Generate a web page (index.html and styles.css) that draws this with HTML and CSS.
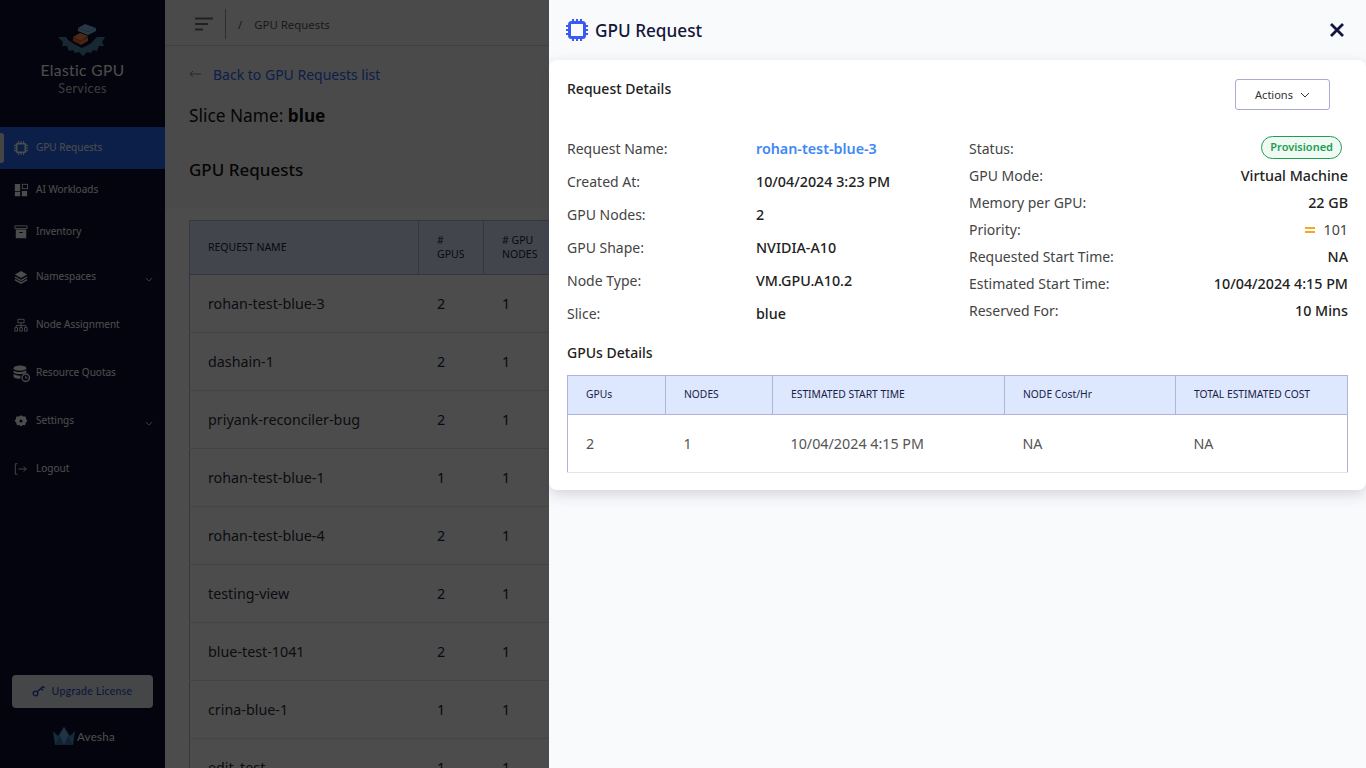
FILE: index.html
```html
<!DOCTYPE html>
<html lang="en">
<head>
<meta charset="utf-8">
<title>GPU Request</title>
<link rel="stylesheet" href="styles.css">
</head>
<body>
<div class="app">
  <aside class="sidebar">
    <div class="brand">
      <svg class="brand-mark" viewBox="0 0 65 40" width="65" height="40">
        <path d="M8 17h8l2 3 6 4 8 4 8-4 4-4 3-3h8l-3 5 2 4h-5l-2 5-4-1-2 3-4-1-4 4-4-4-4 1-2-3-4 1-2-5h-5l1-4z" fill="#4f86a8"/>
        <path d="M23 17l7-4 8 3-7 5z" fill="#ff8a4a"/>
        <path d="M23 17l8 4v4l-8-4z" fill="#e8652c"/>
        <path d="M31 21l7-4v4l-7 4z" fill="#ff7a3a"/>
        <path d="M28 8l7-4 11 4-8 4z" fill="#7fb8e8"/>
        <path d="M28 8l10 4v3l-10-4z" fill="#8fc0e8"/>
        <path d="M38 12l8-4v3l-8 4z" fill="#8abce6"/>
      </svg>
      <div class="brand-name">Elastic GPU</div>
      <div class="brand-sub">Services</div>
    </div>
    <nav class="nav">
      <a class="nav-item active">
        <svg class="nav-icon" viewBox="0 0 16 16"><rect x="3" y="3" width="10" height="10" rx="1.5" fill="none" stroke="currentColor" stroke-width="2"/><path d="M5 0v3M8 0v3M11 0v3M5 13v3M8 13v3M11 13v3M0 5h3M0 8h3M0 11h3M13 5h3M13 8h3M13 11h3" stroke="currentColor" stroke-width="1.2"/></svg>
        <span>GPU Requests</span>
      </a>
      <a class="nav-item">
        <svg class="nav-icon" viewBox="0 0 16 16"><path d="M1 1h6v8H1zM1 10h6v5H1zM9 9h6v6H9z" fill="currentColor"/><rect x="9.5" y="1.5" width="6" height="5" fill="none" stroke="currentColor"/></svg>
        <span>AI Workloads</span>
      </a>
      <a class="nav-item">
        <svg class="nav-icon" viewBox="0 0 16 16"><path d="M1 1h14v3H1z" fill="none" stroke="currentColor"/><path fill-rule="evenodd" d="M2 5h12v10H2zM6 8v1h4V8z" fill="currentColor"/></svg>
        <span>Inventory</span>
      </a>
      <a class="nav-item tall">
        <svg class="nav-icon" viewBox="0 0 16 16"><path d="M8 1l7 4-7 4-7-4z" fill="currentColor"/><path d="M1 8l7 4 7-4M1 11l7 4 7-4" fill="none" stroke="currentColor" stroke-width="1.5"/></svg>
        <span>Namespaces</span>
        <svg class="nav-caret" viewBox="0 0 10 6"><path d="M1 1l4 4 4-4" fill="none" stroke="currentColor"/></svg>
      </a>
      <a class="nav-item tall">
        <svg class="nav-icon" viewBox="0 0 16 16"><path d="M4.500 1.500h7v4h-7zM8 5.500v3M2.500 11V8.500h11V11M8 8.500V11" fill="none" stroke="currentColor"/><path d="M1 11h3v4H1zM6.500 11h3v4h-3zM12 11h3v4h-3z" fill="none" stroke="currentColor"/></svg>
        <span>Node Assignment</span>
      </a>
      <a class="nav-item tall">
        <svg class="nav-icon wide" viewBox="0 0 16 16"><ellipse cx="6.500" cy="3" rx="6" ry="2.500" fill="currentColor"/><path d="M.5 5c1 2 9 2.500 12 0v2c-3 2-10 2-12 0zM.5 8.500c2 1.500 5 1.800 7 1.500-.7 1-.8 2-.7 3-3 0-6-.8-6.300-2z" fill="currentColor"/><circle cx="12" cy="12" r="3.500" fill="none" stroke="currentColor" stroke-width="1.300"/><path d="M12 10v2.300h1.800" fill="none" stroke="currentColor"/></svg>
        <span>Resource Quotas</span>
      </a>
      <a class="nav-item tall">
        <svg class="nav-icon" viewBox="0 0 16 16"><path fill-rule="evenodd" d="M8 1.500l2.500 1.300 2.800.1.600 2.700 1.300 2.400-1.800 2.100-.7 2.700-2.700-.1L8 14.200l-2-1.500-2.700.1-.7-2.700L.8 8l1.300-2.400.6-2.700 2.800-.1zM8 6.200a1.800 1.800 0 100 3.600 1.800 1.800 0 000-3.600z" fill="currentColor"/></svg>
        <span>Settings</span>
        <svg class="nav-caret" viewBox="0 0 10 6"><path d="M1 1l4 4 4-4" fill="none" stroke="currentColor"/></svg>
      </a>
      <a class="nav-item tall">
        <svg class="nav-icon" viewBox="0 0 16 16"><path d="M4 2H1.500v12H4M5 8h9M11 5l3 3-3 3" fill="none" stroke="currentColor"/></svg>
        <span>Logout</span>
      </a>
    </nav>
    <div class="side-foot">
      <button class="upgrade">
        <svg viewBox="0 0 14 12" width="14" height="12"><circle cx="3.500" cy="8.500" r="2.300" fill="none" stroke="currentColor" stroke-width="1.300"/><path d="M5.200 6.800L11 1.500M9 3.500l2 2M11 1.500l1.500 1.500" fill="none" stroke="currentColor" stroke-width="1.400"/></svg>
        <span>Upgrade License</span>
      </button>
      <div class="avesha">
        <svg viewBox="0 0 24 18" width="24" height="18"><path d="M1 4l5 5 2-3 4-6 4 6 2 3 5-5-2 14H3z" fill="#4f8fc0"/><path d="M12 0l-4 9 4 9 4-9z" fill="#6fb0e0"/><path d="M3 18l5-9 4 9zM21 18l-5-9-4 9z" fill="#3a75a8"/></svg>
        <span>Avesha</span>
      </div>
    </div>
  </aside>

  <main class="main">
    <header class="topbar">
      <svg class="menu-icon" viewBox="0 0 18 14" width="18" height="14"><path d="M0 1.500h18M0 7h13M0 12.500h8" stroke="#6f6f6f" stroke-width="2.200" fill="none"/></svg>
      <span class="top-divider"></span>
      <span class="crumb-sep">/</span>
      <span class="crumb">GPU Requests</span>
    </header>
    <div class="content">
      <a class="back">
        <svg class="back-arrow" viewBox="0 0 12 8" width="12" height="8"><path d="M12 4H1M4 1L1 4l3 3" fill="none" stroke="#888" stroke-width="1"/></svg>
        <span class="back-text">Back to GPU Requests list</span>
      </a>
      <h2 class="slice">Slice Name: <b>blue</b></h2>
      <h2 class="page-title">GPU Requests</h2>
    </div>
    <section class="table-card">
      <table class="req-table">
        <colgroup><col class="c-name"><col class="c-gpus"><col class="c-nodes"><col class="c-rest"></colgroup>
        <thead>
          <tr><th>REQUEST NAME</th><th># GPUS</th><th># GPU NODES</th><th></th></tr>
        </thead>
        <tbody>
          <tr><td>rohan-test-blue-3</td><td class="blue">2</td><td class="red">1</td><td></td></tr>
          <tr><td>dashain-1</td><td class="blue">2</td><td class="red">1</td><td></td></tr>
          <tr><td>priyank-reconciler-bug</td><td class="blue">2</td><td class="red">1</td><td></td></tr>
          <tr><td>rohan-test-blue-1</td><td class="red">1</td><td class="red">1</td><td></td></tr>
          <tr><td>rohan-test-blue-4</td><td class="blue">2</td><td class="red">1</td><td></td></tr>
          <tr><td>testing-view</td><td class="blue">2</td><td class="red">1</td><td></td></tr>
          <tr><td>blue-test-1041</td><td class="blue">2</td><td class="red">1</td><td></td></tr>
          <tr><td>crina-blue-1</td><td class="red">1</td><td class="red">1</td><td></td></tr>
          <tr><td>edit_test</td><td class="red">1</td><td class="red">1</td><td></td></tr>
        </tbody>
      </table>
    </section>
  </main>
</div>

<div class="backdrop"></div>

<aside class="drawer">
  <header class="drawer-head">
    <svg class="chip" viewBox="0 0 22 22" width="22" height="22"><rect x="3.500" y="3.500" width="15" height="15" rx="2" fill="none" stroke="#3b5bf0" stroke-width="3"/><path d="M7 0v3M11 0v3M15 0v3M7 19v3M11 19v3M15 19v3M0 7h3M0 11h3M0 15h3M19 7h3M19 11h3M19 15h3" stroke="#3b5bf0" stroke-width="2.100"/></svg>
    <h1 class="drawer-title">GPU Request</h1>
    <svg class="close" viewBox="0 0 16 16" width="16" height="16"><path d="M2 2l12 12M14 2L2 14" stroke="#14163f" stroke-width="2.800" fill="none"/></svg>
  </header>
  <section class="card">
    <div class="card-top">
      <h3 class="section-title">Request Details</h3>
      <button class="actions">Actions
        <svg viewBox="0 0 10 6" width="10" height="6"><path d="M1 1l4 4 4-4" fill="none" stroke="#333" stroke-width="1"/></svg>
      </button>
    </div>
    <div class="details">
      <dl class="col-left">
        <div class="row"><dt>Request Name:</dt><dd class="link">rohan-test-blue-3</dd></div>
        <div class="row"><dt>Created At:</dt><dd>10/04/2024 3:23 PM</dd></div>
        <div class="row"><dt>GPU Nodes:</dt><dd>2</dd></div>
        <div class="row"><dt>GPU Shape:</dt><dd>NVIDIA-A10</dd></div>
        <div class="row"><dt>Node Type:</dt><dd>VM.GPU.A10.2</dd></div>
        <div class="row"><dt>Slice:</dt><dd>blue</dd></div>
      </dl>
      <dl class="col-right">
        <div class="row"><dt>Status:</dt><dd><span class="badge">Provisioned</span></dd></div>
        <div class="row"><dt>GPU Mode:</dt><dd>Virtual Machine</dd></div>
        <div class="row"><dt>Memory per GPU:</dt><dd>22 GB</dd></div>
        <div class="row"><dt>Priority:</dt><dd class="priority"><span class="eq"></span><span>101</span></dd></div>
        <div class="row"><dt>Requested Start Time:</dt><dd>NA</dd></div>
        <div class="row"><dt>Estimated Start Time:</dt><dd>10/04/2024 4:15 PM</dd></div>
        <div class="row"><dt>Reserved For:</dt><dd>10 Mins</dd></div>
      </dl>
    </div>
    <h3 class="section-title gpus-title">GPUs Details</h3>
    <table class="gpu-table">
      <colgroup><col class="g1"><col class="g2"><col class="g3"><col class="g4"><col class="g5"></colgroup>
      <thead>
        <tr><th>GPUs</th><th>NODES</th><th>ESTIMATED START TIME</th><th>NODE Cost/Hr</th><th>TOTAL ESTIMATED COST</th></tr>
      </thead>
      <tbody>
        <tr><td>2</td><td>1</td><td>10/04/2024 4:15 PM</td><td>NA</td><td>NA</td></tr>
      </tbody>
    </table>
  </section>
</aside>
</body>
</html>
```

FILE: styles.css
```css
* { box-sizing: border-box; }
html, body { margin: 0; height: 100%; overflow: hidden; }
body { font-family: "Noto Sans", "Open Sans", sans-serif; color: #222; background: #f8f9fc; }
h1, h2, h3, dl, dd, dt { margin: 0; font-weight: 400; }
button { font-family: inherit; }

.app { display: flex; height: 768px; overflow: hidden; }

/* sidebar */
.sidebar { flex: 0 0 165px; height: 768px; background: #0b0f2e; color: #fff; display: flex; flex-direction: column; }
.brand { height: 127px; padding-top: 20px; text-align: center; }
.brand-mark { display: block; margin: 0 auto; }
.brand-name { font-family: Lato, sans-serif; font-size: 15.500px; line-height: 20px; letter-spacing: .4px; color: #fff; }
.brand-sub { font-family: Lato, sans-serif; font-size: 12.500px; line-height: 16px; letter-spacing: .4px; margin-top: 1px; color: #c9ccd4; }
.nav { display: flex; flex-direction: column; }
.nav-item { position: relative; display: flex; align-items: center; height: 42px; padding: 0 14px; font-size: 10px; color: #fff; }
.nav-item span { margin-left: 8px; margin-bottom: 2px; }
.nav-item.tall { height: 48px; }
.nav-item.active { background: #2868f5; }
.nav-item.active::before { content: ""; position: absolute; left: 0; top: 6px; width: 4px; height: 30px; border-radius: 0 3px 3px 0; background: #e8e8e8; }
.nav-icon { width: 14px; height: 14px; flex: none; }
.nav-icon.wide { width: 17px; height: 17px; margin-left: -1px; margin-right: -2px; }
.nav-caret { width: 8px; height: 5px; margin-left: auto; margin-right: -2px; margin-top: 4px; }
.side-foot { margin-top: auto; padding: 0 12px 21px; }
.upgrade { width: 141px; height: 33px; border: 0; border-radius: 4px; background: #e6e9f2; color: #2848b8; font-family: Lato, sans-serif; font-size: 10.500px; letter-spacing: .3px; display: flex; align-items: center; justify-content: center; gap: 6px; padding: 0 1px 2px 0; }
.avesha { display: flex; align-items: center; justify-content: center; gap: 1px; margin-top: 19px; height: 20px; font-family: Lato, sans-serif; font-size: 11.500px; letter-spacing: .3px; color: #fff; padding: 0 0 2px 2px; }

/* main */
.main { flex: 1; min-width: 0; display: flex; flex-direction: column; }
.topbar { flex: none; display: flex; align-items: center; height: 46px; padding-left: 30px; border-bottom: 1px solid #d8d8d8; background: #f8f9fc; font-size: 11.400px; color: #555; }
.menu-icon { margin-top: 3px; }
.top-divider { width: 1px; height: 30px; background: #999; margin: 2px 10px 0 12px; }
.crumb-sep { margin: 4px 0 0 2px; }
.crumb { margin: 4px 0 0 12px; }
.content { flex: none; padding: 17px 24px 0; }
.back { display: flex; align-items: center; height: 22px; font-size: 14px; color: #2a68f0; }
.back-arrow { margin-right: 12px; }
.slice { font-size: 17.300px; line-height: 24px; margin-top: 19px; color: #111; }
.slice b { font-weight: 700; }
.page-title { font-size: 17px; line-height: 24px; margin-top: 30px; font-weight: 500; color: #111; }
.table-card { flex: none; margin-top: 26px; padding: 12px 0 0 24px; background: #fff; border-radius: 8px 0 0 0; }
.req-table { border-collapse: collapse; table-layout: fixed; width: 700px; }
.c-name { width: 229px; } .c-gpus { width: 65px; } .c-nodes { width: 70px; }
.req-table th { background: #dde7fd; border: 1px solid #b0b4d9; height: 54px; padding: 0 18px 2px; font-size: 10.500px; font-weight: 400; text-align: left; color: #1b1d4a; }
.req-table td { height: 58px; padding: 0 18px 1px; font-size: 14.300px; border: 1px solid #e3e5ee; border-left-color: #b0b4d9; border-right-color: transparent; color: #2b2f3a; }
.req-table td + td { border-left-color: transparent; }
.req-table .blue { color: #0c2850; }
.req-table .red { color: #3a0a2a; }

/* overlay */
.backdrop { position: fixed; inset: 0; background: rgba(0, 0, 0, .7); }
.drawer { position: fixed; top: 0; left: 549px; right: 0; bottom: 0; background: #f9fafc; }
.drawer-head { display: flex; align-items: center; height: 60px; padding: 0 21px 0 17px; }
.chip { flex: none; }
.drawer-title { font-size: 17.200px; font-weight: 500; margin-left: 7px; margin-top: 1px; color: #14163a; }
.close { margin-left: auto; }
.card { background: #fff; border-radius: 8px; padding: 18px; box-shadow: 0 5px 14px rgba(40, 40, 60, .16); height: 430px; }
.card-top { display: flex; justify-content: space-between; align-items: flex-start; padding-right: 18px; height: 54px; }
.section-title { font-size: 14px; line-height: 20px; font-weight: 500; color: #222; }
.card-top .section-title { margin-top: 1px; }
.actions { height: 31px; width: 95px; margin-top: 1px; background: #fff; border: 1px solid #a8aad8; border-radius: 3px; font-size: 11px; color: #333; display: flex; align-items: center; justify-content: center; gap: 7px; padding: 0; }
.details { display: flex; height: 199px; }
.col-left { flex: 0 0 402px; }
.col-right { flex: 1; padding-top: 3px; }
.row { display: flex; align-items: center; font-size: 14px; color: #444; }
.row dd { font-size: 14.300px; }
.col-left .row { height: 33px; }
.col-left dt { width: 189px; }
.col-left dd { font-weight: 500; color: #222; }
.col-right .row { height: 27px; justify-content: space-between; }
.col-right dd { font-weight: 500; color: #222; }
.link { color: #4088f5 !important; font-weight: 600 !important; }
.badge { display: block; margin: 0 6px 3px 0; padding: 0 8px; height: 23px; line-height: 20px; border: 1px solid #1f9d55; border-radius: 12px; background: #eefaf2; color: #1f9d55; font-size: 11px; font-weight: 600; }
.priority { display: flex; align-items: center; gap: 8px; font-weight: 400 !important; color: #444 !important; }
.eq { width: 10px; height: 6px; border-top: 2px solid #f5a623; border-bottom: 2px solid #f5a623; }
.gpus-title { margin-top: 12px; }
.gpu-table { margin-top: 12px; width: 780px; margin-left: 0; border-collapse: collapse; table-layout: fixed; }
.g1 { width: 98px; } .g2 { width: 107px; } .g3 { width: 232px; } .g4 { width: 171px; } .g5 { width: 172px; }
.gpu-table th { height: 39px; padding: 0 18px 2px; background: #dde7fd; border: 1px solid #b0b4d9; font-size: 10.300px; font-weight: 400; text-align: left; color: #1b1d4a; }
.gpu-table td { height: 58px; padding: 0 18px; font-size: 14.300px; color: #555; border-bottom: 1px solid #e3e5ee; }
.gpu-table td:first-child { border-left: 1px solid #b0b4d9; }
.gpu-table td:last-child { border-right: 1px solid #b0b4d9; }
```
